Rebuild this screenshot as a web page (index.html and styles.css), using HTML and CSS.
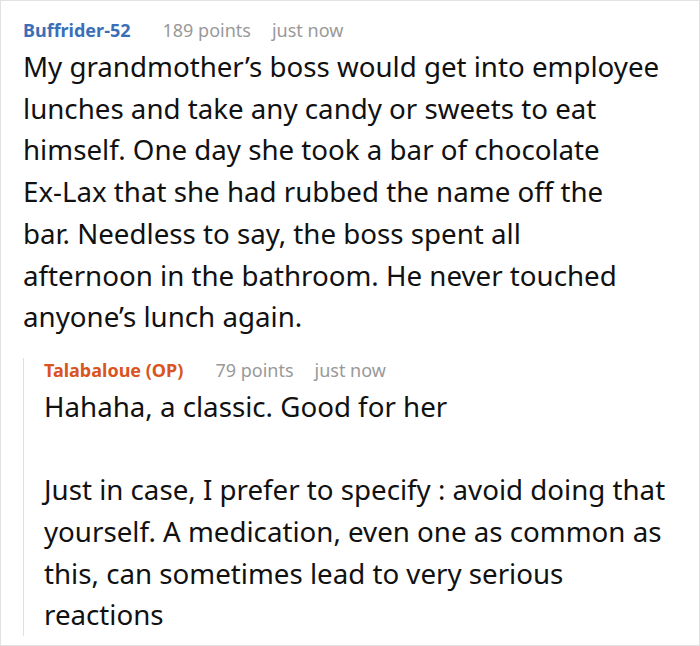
FILE: index.html
```html
<!DOCTYPE html>
<html>
<head>
<meta charset="utf-8">
<link rel="stylesheet" href="styles.css">
</head>
<body>
<div class="card">
  <div class="comment">
    <div class="meta">
      <span class="author">Buffrider-52</span>
      <span class="points">189 points</span>
      <span class="time">just now</span>
    </div>
    <div class="text">My grandmother’s boss would get into employee lunches and take any candy or sweets to eat himself. One day she took a bar of chocolate <span class="nowrap">Ex-Lax</span> that she had rubbed the name off the<br>bar. Needless to say, the boss spent all<br>afternoon in the bathroom. He never touched anyone’s lunch again.</div>
    <div class="reply">
      <div class="meta">
        <span class="author op">Talabaloue (OP)</span>
        <span class="points">79 points</span>
        <span class="time">just now</span>
      </div>
      <div class="text">
        <p>Hahaha, a classic. Good for her</p>
        <p>Just in case, I prefer to specify : avoid doing that yourself. A medication, even one as common as this, can sometimes lead to very serious reactions</p>
      </div>
    </div>
  </div>
</div>
</body>
</html>
```
FILE: styles.css
```css
html, body {
  margin: 0;
  padding: 0;
  background: #fff;
}
.card {
  box-sizing: border-box;
  width: 700px;
  height: 646px;
  border: 1px solid #e2e2e2;
  padding: 17px 22px 0 22px;
  font-family: "Noto Sans", "Open Sans", sans-serif;
  overflow: hidden;
}
.meta {
  display: flex;
  gap: 21px;
  font-size: 18px;
  line-height: 24px;
  color: #999;
}
.author {
  font-weight: 700;
  color: #3a6fb8;
  margin-right: 11px;
}
.author.op {
  color: #d9541e;
}
.text {
  font-size: 27.7px;
  line-height: 41.7px;
  color: #111;
  margin-top: 4px;
}
.nowrap {
  white-space: nowrap;
}
.text p {
  margin: 0;
}
.text p + p {
  margin-top: 41.7px;
}
.reply {
  margin-top: 30px;
  border-left: 1px solid #e0e0e0;
  padding-left: 20px;
}
.reply .meta {
  margin-top: -10px;
}
.reply .text {
  margin-top: 4px;
  margin-bottom: -8px;
}
```
